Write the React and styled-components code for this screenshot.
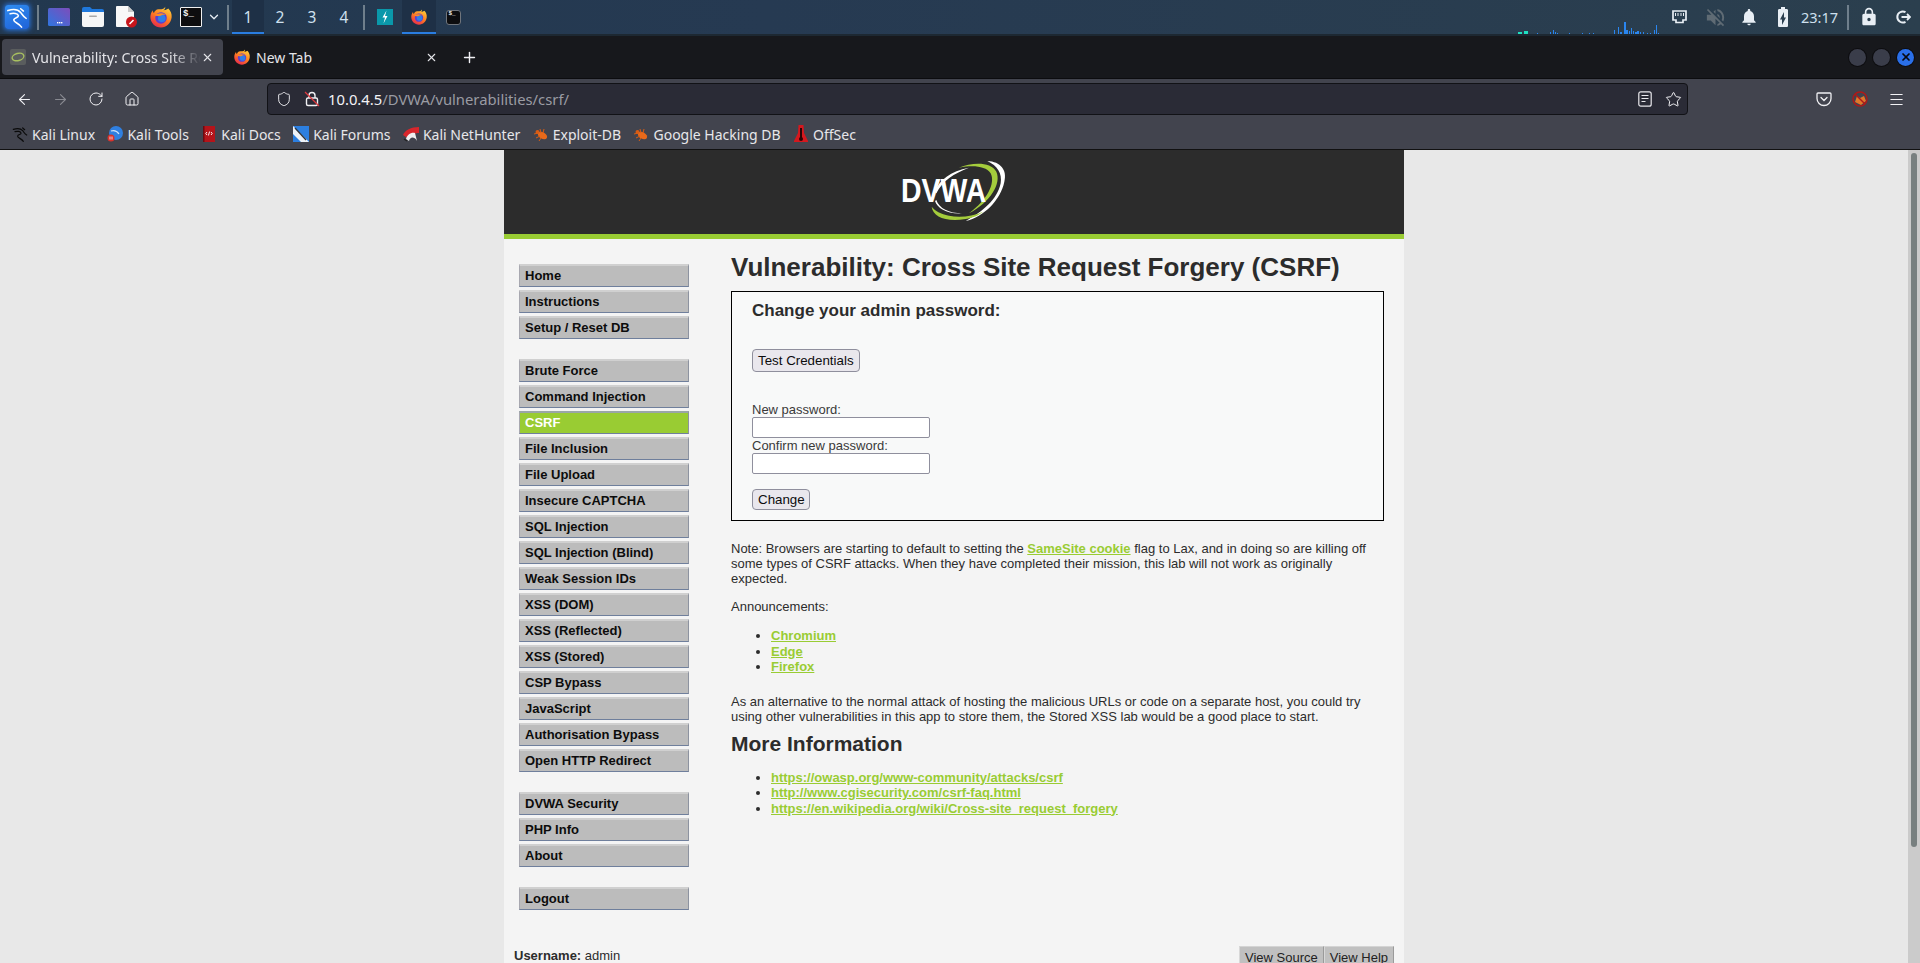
import React from 'react';
import styled, { createGlobalStyle } from 'styled-components';
import { ArrowLeft, ArrowRight, RotateCw, House, Shield, Star, X, Plus, ChevronDown, Menu as MenuIcon } from 'lucide-react';
import { MdNotifications, MdLock, MdVolumeOff, MdBatteryChargingFull } from 'react-icons/md';

const UI_FONT = '"Noto Sans", "Open Sans", sans-serif';

const Global = createGlobalStyle`
    html, body { margin: 0; height: 100%; overflow: hidden; }
    body { font-family: "Liberation Sans", Arial, sans-serif; }
    #root { height: 100%; }
`;

const Screen = styled.div`
    height: 100vh;
    display: flex;
    flex-direction: column;
`;

/* desktop panel */
const Panel = styled.div`
    height: 34px;
    flex: none;
    display: flex;
    align-items: stretch;
    background: linear-gradient(90deg, #22384f 0%, #263a52 40%, #2b3f4e 100%);
    border-bottom: 2px solid #1d2832;
    color: #dfe8f0;
`;

const Slot = styled.div`
    width: ${p => p.$w ?? 34}px;
    flex: none;
    display: flex;
    align-items: center;
    justify-content: center;
    background: ${p => p.$active ? '#1e3046' : 'transparent'};
    box-shadow: ${p => p.$active ? 'inset 0 -2px 0 #2a7de1' : 'none'};
    color: #e8eef4;
`;

const Workspace = styled(Slot)`
    font: 15.5px ${UI_FONT};
    color: #cfe0ee;
`;

const PanelSep = styled.div`
    width: 2px;
    height: 25px;
    align-self: center;
    margin: 0 3px;
    background: #6f7f8c;
`;

const Clock = styled.div`
    width: 43px;
    align-self: center;
    font: 14.5px ${UI_FONT};
    color: #cfe0ee;
    margin-left: 1px;
`;

const Graph = styled.svg`
    margin-left: auto;
    margin-right: 2px;
    display: block;
`;

/* browser chrome */
const TabRow = styled.div`
    height: 43px;
    flex: none;
    background: #17181c;
    display: flex;
    align-items: center;
    gap: 3px;
    padding-left: 2px;
    font: 14px ${UI_FONT};
    color: #e4e4e8;
    border-bottom: 1px solid #0c0c0f;
    box-sizing: border-box;
`;

const Tab = styled.div`
    width: ${p => p.$w}px;
    height: 36px;
    display: flex;
    align-items: center;
    padding: 0 9px 0 8px;
    box-sizing: border-box;
    border-radius: 4px;
    background: ${p => p.$active ? '#42444e' : 'transparent'};
    flex: none;
`;

const TabTitle = styled.span`
    flex: 1;
    margin-left: 6px;
    white-space: nowrap;
    overflow: hidden;
    mask-image: ${p => p.$fade ? 'linear-gradient(90deg, #000 82%, transparent 100%)' : 'none'};
`;

const NewTab = styled.div`
    margin-left: 11px;
    display: flex;
    color: #f0f0f4;
`;

const WindowControls = styled.div`
    margin-left: auto;
    margin-right: 6px;
    display: flex;
    gap: 7px;
`;

const WindowDot = styled.div`
    width: 17px;
    height: 17px;
    border-radius: 50%;
    background: ${p => p.$close ? '#2a6fe8' : '#3a3d4a'};
    box-shadow: 0 0 0 1px #0d0d10;
    display: flex;
    align-items: center;
    justify-content: center;
    color: #08090c;
`;

const NavBar = styled.div`
    height: 40px;
    flex: none;
    background: #42444e;
    display: flex;
    align-items: center;
    color: #f2f2f5;
    padding-left: 6px;
`;

const NavButton = styled.div`
    width: 36px;
    flex: none;
    display: flex;
    justify-content: center;
    opacity: ${p => p.$dim ? 0.4 : 1};
`;

const UrlBar = styled.div`
    width: 1421px;
    height: 32px;
    box-sizing: border-box;
    margin-left: 117px;
    flex: none;
    background: #2a2b36;
    border: 1px solid #111216;
    border-radius: 4px;
    display: flex;
    align-items: center;
    padding: 0 0 0 8px;
    font: 14.8px ${UI_FONT};
    color: #f3f3f6;
`;

const UrlIcon = styled.div`
    width: ${p => p.$w || 28}px;
    display: flex;
    flex: none;
    align-items: center;
    justify-content: ${p => p.$left ? 'flex-start' : 'center'};
`;

const UrlDim = styled.span`
    color: #9a9ba3;
`;

const UrlEnd = styled.div`
    margin-left: auto;
    display: flex;
    align-items: center;
`;

const ToolButtons = styled.div`
    margin-left: 118px;
    display: flex;
    align-items: center;
`;

const BookmarkBar = styled.div`
    height: 31px;
    flex: none;
    background: #42444e;
    border-bottom: 1px solid #111;
    box-sizing: border-box;
    display: flex;
    align-items: center;
    padding-left: 12px;
    gap: 12.4px;
    font: 14px ${UI_FONT};
    color: #e7e7ea;
`;

const Bookmark = styled.div`
    display: flex;
    align-items: center;
    gap: 4px;
    white-space: nowrap;
`;

/* the page */
const Viewport = styled.div`
    flex: 1;
    min-height: 0;
    display: flex;
`;

const PageArea = styled.div`
    flex: 1;
    overflow: hidden;
    background: #e8e8e8;
`;

const Container = styled.div`
    width: 900px;
    margin: 0 auto;
    background: #f4f4f4;
    font-size: 13px;
    line-height: 15px;
    color: #2c2c2c;
`;

const Header = styled.div`
    height: 80px;
    padding-bottom: 4px;
    background: #2c2c2c;
    border-bottom: 5px solid #99cc33;
    display: flex;
    align-items: center;
    justify-content: center;
`;

const Body = styled.div`
    display: flex;
    padding: 25px 20px 0 15px;
`;

const Sidebar = styled.div`
    width: 170px;
    flex: none;
    margin-right: 42px;
`;

const MenuGroup = styled.ul`
    list-style: none;
    margin: 0 0 20px;
    padding: 0;
`;

const MenuItem = styled.li`
    height: 23px;
    box-sizing: border-box;
    margin-bottom: 3px;
    padding: 0 0 2px 5px;
    display: flex;
    align-items: center;
    font-weight: bold;
    color: ${p => p.$active ? '#fff' : '#0c0c0c'};
    background: ${p => p.$active ? '#99cc33' : '#bcbcbc'};
    border: 1px solid ${p => p.$active ? '#7c8ca0' : '#bcbcbc'};
    border-top: 2px solid ${p => p.$active ? '#9aa6a8' : '#d0d0d0'};
    border-bottom: 1px solid #6f7f9c;
    border-right-color: #8d93a0;
    border-left-color: #a8a8b0;
`;

const Main = styled.div`
    flex: 1;
    min-width: 0;
    margin-top: -12px;
`;

const Title = styled.h1`
    margin: 0;
    font-size: 26px;
    line-height: 30px;
    height: 39px;
    color: #2c2c2c;
`;

const FormBox = styled.div`
    box-sizing: border-box;
    height: 230px;
    border: 1px solid #000;
    background: #f8f9f9;
    padding: 9px 20px 0;
`;

const FormTitle = styled.h3`
    margin: 0;
    font-size: 17px;
    line-height: 20px;
    color: #2c2c2c;
`;

const FormButton = styled.button`
    display: block;
    box-sizing: border-box;
    width: ${p => p.$w}px;
    height: ${p => p.$h}px;
    margin-top: ${p => p.$top}px;
    padding: 0 0 0 5px;
    text-align: left;
    font: 13.33px "Liberation Sans", Arial, sans-serif;
    color: #0c0c0d;
    background: #e9e7ed;
    border: 1px solid #8f8f9d;
    border-radius: 4px;
`;

const FieldLabel = styled.div`
    margin-top: ${p => p.$top}px;
    height: 15px;
    line-height: 15px;
    color: #3a3a3a;
`;

const Input = styled.input`
    display: block;
    box-sizing: border-box;
    width: 178px;
    height: 21px;
    margin: 0;
    background: #fff;
    border: 1px solid #8f8f9d;
    border-radius: 2px;
`;

const Para = styled.p`
    margin: ${p => p.$top ?? 13}px 0 0;
`;

const BulletList = styled.ul`
    margin: ${p => p.$top}px 0 0;
    padding-left: 40px;
`;

const Bullet = styled.li`
    height: 15.5px;
`;

const GreenLink = styled.a`
    color: #99cc33;
    font-weight: bold;
    text-decoration: underline;
`;

const SubTitle = styled.h2`
    margin: 7px 0 0;
    font-size: 21px;
    line-height: 25px;
    color: #2c2c2c;
`;

const Footer = styled.div`
    display: flex;
    justify-content: space-between;
    align-items: flex-start;
    padding: 0 10px;
    margin-top: 17px;
`;

const UserInfo = styled.div`
    padding-top: 1px;
`;

const FooterButtons = styled.div`
    display: flex;
    margin-top: -1px;
`;

const FooterButton = styled.div`
    height: 24px;
    padding: 3px 5px 0;
    box-sizing: border-box;
    background: #c0c0c0;
    border-top: 1px solid #d4d4d4;
    border-left: 1px solid #d8d8d8;
    border-right: 1px solid #9a9a9a;
    color: #222;
`;

const Scrollbar = styled.div`
    width: 12px;
    flex: none;
    background: #cbcbcb;
    padding: 3px 3px 0;
    box-sizing: border-box;
`;

const ScrollThumb = styled.div`
    height: 694px;
    border-radius: 3px;
    background: #788080;
`;

/* drawings */
const KaliDragon = ({ size = 24, color = '#fff', width = 1.7 }) => (
    <svg width={size} height={size} viewBox="0 0 24 24" fill="none" stroke={color} strokeWidth={width} strokeLinecap="round">
        <path d="M2 5C8 3 13 3.500 16 7C18 9.500 19 12 22 13.500" />
        <path d="M16 3L19 5.500" />
        <path d="M4.500 8.500C8 7.500 13 8 13.500 10.500C14 13 9 12.500 8.500 15C8 18 14 18.500 17 23" />
    </svg>
);

const KaliTile = styled.div`
    width: 24px;
    height: 24px;
    border-radius: 3px;
    background: linear-gradient(160deg, #2f8cf0, #1f62d8);
    box-shadow: 0 0 5px 1px #2a78e8;
    display: flex;
    align-items: center;
    justify-content: center;
`;

const DesktopIcon = () => (
    <svg width="22" height="18" viewBox="0 0 22 18">
        <defs>
            <linearGradient id="dsk" x1="0" y1="1" x2="1" y2="0">
                <stop offset="0" stopColor="#2f76e0" />
                <stop offset="1" stopColor="#7d4dbb" />
            </linearGradient>
        </defs>
        <rect width="22" height="18" rx="1.5" fill="url(#dsk)" />
        <rect x="9" y="14" width="1.4" height="1.4" fill="#fff" />
        <rect x="11" y="14" width="1.4" height="1.4" fill="#fff" />
        <rect x="13" y="14" width="1.4" height="1.4" fill="#fff" />
    </svg>
);

const FolderIcon = () => (
    <svg width="22" height="20" viewBox="0 0 22 20">
        <path d="M0 2a2 2 0 0 1 2-2h6l2 2h10a2 2 0 0 1 2 2v3H0z" fill="#1f78dc" />
        <path d="M0 5h22v13a2 2 0 0 1-2 2H2a2 2 0 0 1-2-2z" fill="#f6f6f6" />
        <rect x="7" y="8.5" width="8" height="1.6" rx=".8" fill="#a8a8a8" />
    </svg>
);

const DocIcon = () => (
    <svg width="22" height="22" viewBox="0 0 22 22">
        <path d="M1 0h11l6 6v14a1 1 0 0 1-1 1H1a1 1 0 0 1-1-1V1a1 1 0 0 1 1-1z" fill="#f8f8f8" />
        <path d="M12 0l6 6h-6z" fill="#c9c9c9" />
        <circle cx="15.5" cy="16" r="5.5" fill="#c8151b" />
        <path d="M13.5 18l4-4" stroke="#fff" strokeWidth="1.6" />
    </svg>
);

const Firefox = ({ size = 22, id }) => (
    <svg width={size} height={size} viewBox="0 0 24 24">
        <defs>
            <linearGradient id={id} x1="0.8" y1="0" x2="0.2" y2="1">
                <stop offset="0" stopColor="#ffd13a" />
                <stop offset="0.5" stopColor="#ff7b22" />
                <stop offset="1" stopColor="#e5254f" />
            </linearGradient>
        </defs>
        <path d="M16.5 .8C17 3 16 4 14.5 4.6C18 4.6 20 2.8 20 2.8C22.6 5.4 24 8.5 23.6 12.4C23 18.6 18 23.5 12 23.5C5.500 23.5 .4 18.3 .4 12C.4 9 1.500 6.500 3 4.500C3 6 3.500 7 4.300 7.500C5 5.500 7 3.500 9 3.500C12.500 3.800 16 3 16.5 .8Z" fill={`url(#${id})`} />
        <circle cx="12" cy="13" r="6.300" fill="#5a3fd0" />
        <circle cx="12.800" cy="13.400" r="4.200" fill="#2f7fe8" />
        <path d="M5 10C8 7.800 13 7 17 9.500C14 9.200 12 10 10.500 11C9 10.800 6.500 11 5 10Z" fill="#ff8a24" />
    </svg>
);

const TerminalTile = styled.div`
    width: ${p => p.$w}px;
    height: ${p => p.$h}px;
    box-sizing: border-box;
    background: #0d0d0f;
    border: ${p => p.$soft ? '1px solid #70757c' : '1px solid #f0f0f0'};
    border-radius: ${p => p.$soft ? 3 : 1}px;
    color: #f0f0f0;
    font: bold ${p => p.$fs}px "Liberation Mono", monospace;
    padding: ${p => p.$soft ? '0 0 0 2px' : '2px 0 0 2px'};
    line-height: ${p => p.$fs}px;
`;

const BoltTile = () => (
    <svg width="16" height="16" viewBox="0 0 16 16">
        <rect width="16" height="16" fill="#0a98aa" />
        <path d="M9.500 1.500L5.500 8.500H8L6.500 14.500L10.500 7H8z" fill="#fff" />
    </svg>
);

const NetworkIcon = () => (
    <svg width="15" height="14" viewBox="0 0 15 14" fill="none">
        <path d="M1 1h13v9h-3v2.500H4V10H1z" stroke="#e8eef4" strokeWidth="1.700" />
        <path d="M3.500 3v3M6 3v3M9 3v3M11.500 3v3" stroke="#e8eef4" strokeWidth="1" />
    </svg>
);

const LogoutIcon = () => (
    <svg width="16" height="16" viewBox="0 0 16 16" fill="none" stroke="#e8eef4" strokeWidth="2">
        <path d="M10.500 3.200A5.500 5.500 0 1 0 10.500 12.800" />
        <path d="M6.500 8H15M12 5l3 3-3 3" strokeWidth="1.800" />
    </svg>
);

const UnsafeLock = () => (
    <svg width="16" height="16" viewBox="0 0 16 16" fill="none">
        <rect x="2.500" y="7" width="11" height="7.500" rx="1.500" stroke="#f0f0f3" strokeWidth="1.400" />
        <path d="M5 7V4.500a3 3 0 0 1 6 0V7" stroke="#f0f0f3" strokeWidth="1.400" />
        <path d="M1 1l14 14" stroke="#e0393e" strokeWidth="1.300" />
    </svg>
);

const ReaderIcon = () => (
    <svg width="14" height="16" viewBox="0 0 14 16" fill="none" stroke="#e8e8ec" strokeWidth="1.200">
        <rect x=".8" y=".8" width="12.400" height="14.400" rx="2" />
        <path d="M3.500 4.500h7M3.500 7.500h7M3.500 10.500h4" />
    </svg>
);

const PocketIcon = () => (
    <svg width="16" height="16" viewBox="0 0 16 16" fill="none" stroke="#f0f0f3" strokeWidth="1.300">
        <path d="M2 2h12a1 1 0 0 1 1 1v4.500a7 7 0 0 1-14 0V3a1 1 0 0 1 1-1z" />
        <path d="M5 6.500l3 3 3-3" strokeLinecap="round" />
    </svg>
);

const BlockedFox = () => (
    <svg width="16" height="16" viewBox="0 0 16 16">
        <path d="M3 11l2-6 3 2 4-2 2 5-5 4z" fill="#e0782a" />
        <circle cx="8" cy="8" r="7" fill="none" stroke="#b01818" strokeWidth="1.400" />
        <path d="M3 3l10 10" stroke="#b01818" strokeWidth="1.400" />
    </svg>
);

const DvwaFavicon = () => (
    <svg width="16" height="16" viewBox="0 0 16 16" style={{ flex: 'none' }}>
        <rect width="16" height="16" rx="2" fill="#5a5d5e" />
        <ellipse cx="8" cy="8" rx="6" ry="3.600" transform="rotate(-15 8 8)" fill="none" stroke="#a8c060" strokeWidth="1.400" />
    </svg>
);

const ToolsFav = () => (
    <svg width="16" height="16" viewBox="0 0 16 16">
        <circle cx="9" cy="7" r="7" fill="#2f7fe0" />
        <path d="M4 5c3-1 6 0 8 3" stroke="#cfe4fa" strokeWidth="1.200" fill="none" />
        <circle cx="4" cy="12" r="3.500" fill="#d8322c" />
        <path d="M3 10.500v3M5 10.500v3" stroke="#fff" strokeWidth=".8" />
    </svg>
);

const DocsFav = () => (
    <svg width="16" height="16" viewBox="0 0 16 16">
        <rect x="2" y="0" width="12" height="16" fill="#b5141a" />
        <rect x="2" y="0" width="1.500" height="16" fill="#6d0b0f" />
        <path d="M6 6L4.800 7.500 6 9M10 6l1.200 1.500L10 9M8.600 5.500L7.400 9.500" stroke="#fff" strokeWidth=".9" fill="none" />
    </svg>
);

const ForumsFav = () => (
    <svg width="16" height="16" viewBox="0 0 16 16">
        <rect width="16" height="16" fill="#2c7fe0" />
        <path d="M0 0l16 16H8L0 8z" fill="#eef3f8" />
        <path d="M2 2l11 12" stroke="#30343a" strokeWidth="1.300" />
    </svg>
);

const HunterFav = () => (
    <svg width="16" height="16" viewBox="0 0 16 16">
        <path d="M0 9C2 4 8 1 16 1V7C11 7 8 9 6 13z" fill="#d8262c" />
        <path d="M3 13C4 9 8 6 12 7L14 15C11 10 7 11 6 15z" fill="#f0f0f0" />
        <path d="M1 13l3 2" stroke="#222" strokeWidth="1.400" />
    </svg>
);

const BugFav = () => (
    <svg width="16" height="16" viewBox="0 0 16 16">
        <ellipse cx="9.500" cy="9.500" rx="5" ry="3.200" transform="rotate(30 9.500 9.500)" fill="#e8691a" />
        <circle cx="4.500" cy="6" r="2" fill="#d85c14" />
        <path d="M1 8l4-1M3 12l4-2M7 3l1 4M11 3l-1 4M6 15l2-3" stroke="#d85c14" strokeWidth="1" />
    </svg>
);

const OffSecFav = () => (
    <svg width="16" height="18" viewBox="0 0 16 18">
        <path d="M5.500 0h5L11 8l4 8v1H1v-1l4-8z" fill="#d4181e" />
        <path d="M8 3v11" stroke="#2a0506" strokeWidth="2" />
        <circle cx="8" cy="14" r="2" fill="#2a0506" />
    </svg>
);

const DvwaLogo = () => (
    <svg width="120" height="70" viewBox="105 30 360 210">
        <path d="M385 48C425 50 445 75 436 110C425 165 375 215 320 228C370 200 415 165 425 115C430 85 415 62 385 48Z" fill="#fff" />
        <path d="M300 68C340 52 395 50 412 80C428 115 395 170 330 205C385 165 410 115 395 85C380 62 340 60 300 68Z" fill="#a4cc3c" />
        <path d="M218 185C222 215 260 232 320 222C345 218 360 210 372 200C340 215 300 218 270 212C245 207 228 198 218 185Z" fill="#a4cc3c" />
        <path d="M228 168C235 190 265 208 310 205C270 205 240 190 232 165Z" fill="#fff" />
        <path d="M228 140C240 105 275 78 330 68C285 85 250 108 232 145Z" fill="#fff" />
        <text x="126" y="170" fill="#fff" fontFamily="Liberation Sans" fontWeight="bold" fontSize="99" textLength="256" lengthAdjust="spacingAndGlyphs">DVWA</text>
    </svg>
);

const TRAFFIC = [
    [0, 4, 2, 1], [6, 4, 3, 1], [19, 1, 1], [32, 1, 2], [35, 1, 4], [37, 1, 2], [39, 1, 1], [51, 1, 1], [64, 1, 1], [71, 1, 1], [75, 1, 1],
    [96, 1, 4], [100, 1, 7], [102, 1, 2], [103, 1, 2], [106, 2, 12], [108, 2, 4], [111, 1, 3], [113, 1, 6], [115, 1, 3], [117, 2, 2],
    [119, 2, 3], [122, 1, 2], [125, 1, 2], [129, 1, 1], [132, 1, 1], [136, 1, 4], [138, 1, 9], [140, 1, 1],
];

const MENU_GROUPS = [
    ['Home', 'Instructions', 'Setup / Reset DB'],
    ['Brute Force', 'Command Injection', 'CSRF', 'File Inclusion', 'File Upload', 'Insecure CAPTCHA', 'SQL Injection', 'SQL Injection (Blind)', 'Weak Session IDs', 'XSS (DOM)', 'XSS (Reflected)', 'XSS (Stored)', 'CSP Bypass', 'JavaScript', 'Authorisation Bypass', 'Open HTTP Redirect'],
    ['DVWA Security', 'PHP Info', 'About'],
    ['Logout'],
];

const BOOKMARKS = [
    ['Kali Linux', <KaliDragon key="k" size={16} color="#0a0a0a" width={1.8} />],
    ['Kali Tools', <ToolsFav key="t" />],
    ['Kali Docs', <DocsFav key="d" />],
    ['Kali Forums', <ForumsFav key="f" />],
    ['Kali NetHunter', <HunterFav key="n" />],
    ['Exploit-DB', <BugFav key="e" />],
    ['Google Hacking DB', <BugFav key="g" />],
    ['OffSec', <OffSecFav key="o" />],
];

const App = () => (
    <Screen>
        <Global />
        <Panel>
            <Slot><KaliTile><KaliDragon size={22} /></KaliTile></Slot>
            <PanelSep />
            <Slot><DesktopIcon /></Slot>
            <Slot><FolderIcon /></Slot>
            <Slot><DocIcon /></Slot>
            <Slot><Firefox id="ffa" /></Slot>
            <Slot $w={26}><TerminalTile $w={22} $h={20} $fs={9}>$_</TerminalTile></Slot>
            <Slot $w={20}><ChevronDown size={14} strokeWidth={2.2} /></Slot>
            <PanelSep />
            <Workspace $w={32} $active>1</Workspace>
            <Workspace $w={32}>2</Workspace>
            <Workspace $w={32}>3</Workspace>
            <Workspace $w={32}>4</Workspace>
            <PanelSep />
            <Slot><BoltTile /></Slot>
            <Slot $active><Firefox size={16} id="ffb" /></Slot>
            <Slot><TerminalTile $w={15} $h={15} $fs={6} $soft>$_</TerminalTile></Slot>
            <Graph width="142" height="34" viewBox="0 0 142 34">
                {TRAFFIC.map(([x, w, h, teal]) => (
                    <rect key={x} x={x} y={34 - h} width={w} height={h} fill={teal ? '#1fe0c0' : '#2a86f0'} />
                ))}
            </Graph>
            <Slot><NetworkIcon /></Slot>
            <Slot $w={2} />
            <Slot><MdVolumeOff size={23} color="#5f6b74" /></Slot>
            <Slot><MdNotifications size={20} /></Slot>
            <Slot><MdBatteryChargingFull size={24} /></Slot>
            <Clock>23:17</Clock>
            <PanelSep />
            <Slot><MdLock size={20} /></Slot>
            <Slot><LogoutIcon /></Slot>
        </Panel>

        <TabRow>
            <Tab $w={221} $active>
                <DvwaFavicon />
                <TabTitle $fade>Vulnerability: Cross Site Re</TabTitle>
                <X size={13} />
            </Tab>
            <Tab $w={221}>
                <Firefox size={16} id="ffc" />
                <TabTitle>New Tab</TabTitle>
                <X size={13} />
            </Tab>
            <NewTab><Plus size={17} /></NewTab>
            <WindowControls>
                <WindowDot />
                <WindowDot />
                <WindowDot $close><X size={12} strokeWidth={3.5} /></WindowDot>
            </WindowControls>
        </TabRow>

        <NavBar>
            <NavButton><ArrowLeft size={17} strokeWidth={1.5} /></NavButton>
            <NavButton $dim><ArrowRight size={17} strokeWidth={1.5} /></NavButton>
            <NavButton><RotateCw size={16} strokeWidth={1.5} /></NavButton>
            <NavButton><House size={16} strokeWidth={1.5} /></NavButton>
            <UrlBar>
                <UrlIcon $w={28} $left><Shield size={16} strokeWidth={1.4} /></UrlIcon>
                <UrlIcon $w={24} $left><UnsafeLock /></UrlIcon>
                <span>10.0.4.5<UrlDim>/DVWA/vulnerabilities/csrf/</UrlDim></span>
                <UrlEnd>
                    <UrlIcon><ReaderIcon /></UrlIcon>
                    <UrlIcon><Star size={17} strokeWidth={1.4} /></UrlIcon>
                </UrlEnd>
            </UrlBar>
            <ToolButtons>
                <UrlIcon $w={36}><PocketIcon /></UrlIcon>
                <UrlIcon $w={36}><BlockedFox /></UrlIcon>
                <UrlIcon $w={36}><MenuIcon size={17} strokeWidth={1.5} /></UrlIcon>
            </ToolButtons>
        </NavBar>

        <BookmarkBar>
            {BOOKMARKS.map(([label, icon]) => (
                <Bookmark key={label}>{icon}<span>{label}</span></Bookmark>
            ))}
        </BookmarkBar>

        <Viewport>
            <PageArea>
                <Container>
                    <Header><DvwaLogo /></Header>
                    <Body>
                        <Sidebar>
                            {MENU_GROUPS.map(group => (
                                <MenuGroup key={group[0]}>
                                    {group.map(item => (
                                        <MenuItem key={item} $active={item === 'CSRF'}>{item}</MenuItem>
                                    ))}
                                </MenuGroup>
                            ))}
                        </Sidebar>
                        <Main>
                            <Title>Vulnerability: Cross Site Request Forgery (CSRF)</Title>
                            <FormBox>
                                <FormTitle>Change your admin password:</FormTitle>
                                <FormButton $w={108} $h={23} $top={28}>Test Credentials</FormButton>
                                <FieldLabel $top={30}>New password:</FieldLabel>
                                <Input type="password" />
                                <FieldLabel $top={0}>Confirm new password:</FieldLabel>
                                <Input type="password" />
                                <FormButton $w={58} $h={21} $top={15}>Change</FormButton>
                            </FormBox>
                            <Para $top={20}>
                                Note: Browsers are starting to default to setting the <GreenLink>SameSite cookie</GreenLink> flag to Lax, and in doing so are killing off some types of CSRF attacks. When they have completed their mission, this lab will not work as originally expected.
                            </Para>
                            <Para>Announcements:</Para>
                            <BulletList $top={14}>
                                <Bullet><GreenLink>Chromium</GreenLink></Bullet>
                                <Bullet><GreenLink>Edge</GreenLink></Bullet>
                                <Bullet><GreenLink>Firefox</GreenLink></Bullet>
                            </BulletList>
                            <Para $top={19}>
                                As an alternative to the normal attack of hosting the malicious URLs or code on a separate host, you could try using other vulnerabilities in this app to store them, the Stored XSS lab would be a good place to start.
                            </Para>
                            <SubTitle>More Information</SubTitle>
                            <BulletList $top={14}>
                                <Bullet><GreenLink>https://owasp.org/www-community/attacks/csrf</GreenLink></Bullet>
                                <Bullet><GreenLink>http://www.cgisecurity.com/csrf-faq.html</GreenLink></Bullet>
                                <Bullet><GreenLink>https://en.wikipedia.org/wiki/Cross-site_request_forgery</GreenLink></Bullet>
                            </BulletList>
                        </Main>
                    </Body>
                    <Footer>
                        <UserInfo><b>Username:</b> admin</UserInfo>
                        <FooterButtons>
                            <FooterButton>View Source</FooterButton>
                            <FooterButton>View Help</FooterButton>
                        </FooterButtons>
                    </Footer>
                </Container>
            </PageArea>
            <Scrollbar><ScrollThumb /></Scrollbar>
        </Viewport>
    </Screen>
);

export default App;
